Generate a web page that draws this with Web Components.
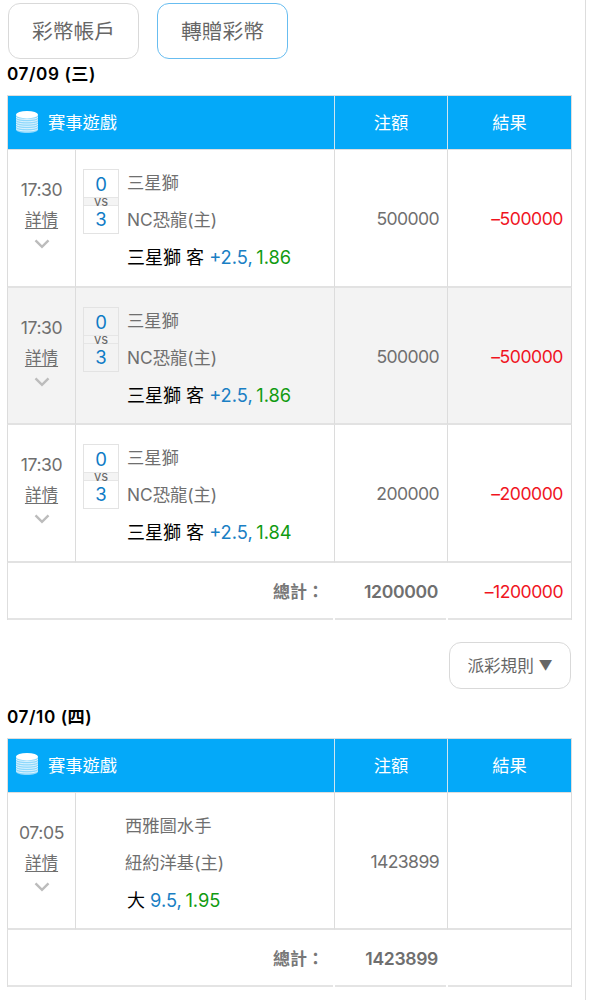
<!DOCTYPE html>
<html lang="zh-Hant">
<head>
<meta charset="utf-8">
<title>彩幣帳戶</title>
<style>
  body {
    margin: 0;
    background: #fff;
    color: #6f6f6f;
    font-family: Inter, "Noto Sans CJK TC", sans-serif;
    font-size: 17px;
  }
  .rules {
    display: flex;
    justify-content: flex-end;
    padding: 22px 1px 13px 0;
  }
  .rules small {
    font-size: 14px;
    vertical-align: 1px;
  }
</style>
</head>
<body>
<account-page>
  <pill-button slot="nav">彩幣帳戶</pill-button>
  <pill-button slot="nav" active>轉贈彩幣</pill-button>

  <bet-table date="07/09 (三)" stake="1200000" result="–1200000">
    <bet-row time="17:30" away="三星獅" home="NC恐龍(主)" away-score="0" home-score="3" pick="三星獅 客" line="+2.5," odds="1.86" stake="500000" result="–500000"></bet-row>
    <bet-row shaded time="17:30" away="三星獅" home="NC恐龍(主)" away-score="0" home-score="3" pick="三星獅 客" line="+2.5," odds="1.86" stake="500000" result="–500000"></bet-row>
    <bet-row time="17:30" away="三星獅" home="NC恐龍(主)" away-score="0" home-score="3" pick="三星獅 客" line="+2.5," odds="1.84" stake="200000" result="–200000"></bet-row>
  </bet-table>

  <div class="rules">
    <pill-button small>派彩規則 <small>▼</small></pill-button>
  </div>

  <bet-table date="07/10 (四)" stake="1423899">
    <bet-row time="07:05" away="西雅圖水手" home="紐約洋基(主)" pick="大" line="9.5," odds="1.95" stake="1423899"></bet-row>
  </bet-table>
</account-page>

<script>
function makeTemplate(html) {
  var template = document.createElement('template')
  template.innerHTML = html
  return template
}

var pageTemplate = makeTemplate(`
    <style>
    :host {
      display: block;
      box-sizing: border-box;
      width: 586px;
      height: 1000px;
      padding: 3px 13px 0 7px;
      border-right: 1px solid #ddd;
      overflow: hidden;
    }
    nav {
      display: flex;
      gap: 18px;
      padding-left: 1px;
    }
    </style>
    <nav><slot name="nav"></slot></nav>
    <slot></slot>
`)

class AccountPage extends HTMLElement {
    constructor(){
        super();
        this.attachShadow({mode: 'open'});
        this.shadowRoot.appendChild(pageTemplate.content.cloneNode(true));
    }
}

var buttonTemplate = makeTemplate(`
    <style>
    :host {
      display: block;
    }
    button {
      display: block;
      box-sizing: border-box;
      width: 131px;
      height: 56px;
      padding: 0;
      border: 1px solid #d9d9d9;
      border-radius: 12px;
      background: #fff;
      color: #666;
      font: inherit;
      font-size: 20.8px;
      line-height: 56px;
      text-align: center;
    }
    :host([active]) button {
      border-color: #68bdf0;
    }
    :host([small]) button {
      width: 122px;
      height: 47px;
      font-size: 16.6px;
      line-height: 46px;
    }
    </style>
    <button><slot></slot></button>
`)

class PillButton extends HTMLElement {
    constructor(){
        super();
        this.attachShadow({mode: 'open'});
        this.shadowRoot.appendChild(buttonTemplate.content.cloneNode(true));
    }
}

var coinTemplate = makeTemplate(`
    <style>
    :host { display: block; width: 22px; height: 22px; }
    svg { display: block; }
    </style>
    <svg width="22" height="22" viewBox="0 0 22 22">
      <path d="M0 3.500V18.500c0 2 5 3.500 11 3.500s11-1.500 11-3.500V3.500z" fill="#fff" fill-opacity=".55"/>
      <path d="M0 6.200c1 3 21 3 22 0M0 8.500c1 3 21 3 22 0M0 10.800c1 3 21 3 22 0M0 13.100c1 3 21 3 22 0M0 15.400c1 3 21 3 22 0M0 17.700c1 3 21 3 22 0" fill="none" stroke="#fff" stroke-opacity=".7"/>
      <ellipse cx="11" cy="3.700" rx="11" ry="3.700" fill="#fff"/>
    </svg>
`)

class CoinIcon extends HTMLElement {
    constructor(){
        super();
        this.attachShadow({mode: 'open'});
        this.shadowRoot.appendChild(coinTemplate.content.cloneNode(true));
    }
}

var tableTemplate = makeTemplate(`
    <style>
    :host {
      display: block;
      width: 565px;
      --columns: 68px 259px 113px 125px;
    }
    h2 {
      margin: 0;
      height: 36px;
      color: #000;
      font-size: 17.2px;
      font-weight: 600;
      line-height: 30px;
      letter-spacing: .55px;
    }
    .head, .total {
      display: grid;
      box-sizing: border-box;
      border: 1px solid #dedede;
    }
    .head {
      grid-template-columns: 326px 113px 124px;
      height: 55px;
      color: #fff;
      background: #04a9f9;
      font-size: 17.3px;
      line-height: 53px;
      text-align: center;
    }
    .head div + div { border-left: 1px solid #cfe6f1; }
    .head .game {
      display: flex;
      align-items: center;
      gap: 10px;
      padding-left: 8px;
    }
    .head coin-icon { margin-top: -2px; }
    .total {
      grid-template-columns: 325px 111px 1fr;
      column-gap: 2px;
      height: 57px;
      border-width: 0 1px;
      line-height: 58px;
      text-align: right;
      font-weight: 600;
    }
    .total div {
      box-sizing: border-box;
      height: 57px;
      border-bottom: 2px solid #e4e4e4;
    }
    .label { padding-right: 9px; font-size: 17px; font-weight: 600; color: #777; }
    .stake, .result { padding-right: 8px; font-size: 17.600px; letter-spacing: -.35px; }
    .result { color: #f0141e; font-weight: 400; letter-spacing: -.5px; }
    </style>
    <h2></h2>
    <div class="head">
      <div class="game"><coin-icon></coin-icon><span>賽事遊戲</span></div>
      <div>注額</div>
      <div>結果</div>
    </div>
    <slot></slot>
    <div class="total">
      <div class="label">總計：</div>
      <div class="stake"></div>
      <div class="result"></div>
    </div>
`)

class BetTable extends HTMLElement {
    constructor(){
        super();
        this.attachShadow({mode: 'open'});
        this.shadowRoot.appendChild(tableTemplate.content.cloneNode(true));
        this.shadowRoot.querySelector('h2').textContent = this.getAttribute('date');
        this.shadowRoot.querySelector('.stake').textContent = this.getAttribute('stake');
        this.shadowRoot.querySelector('.result').textContent = this.getAttribute('result') || '';
    }
}

var scoreTemplate = makeTemplate(`
    <style>
    :host {
      display: block;
      box-sizing: border-box;
      width: 36px;
      height: 65px;
      border: 1px solid #e3e3e3;
      text-align: center;
      color: #0e7bc6;
      font-size: 18.500px;
    }
    .score { height: 27px; line-height: 28px; }
    .score.home { line-height: 27px; }
    .vs {
      box-sizing: border-box;
      height: 9px;
      border: solid #e6e6e6;
      border-width: 1px 0;
      background: #f4f4f4;
      color: #666;
      font-size: 13px;
      line-height: 7px;
    }
    </style>
    <div class="score away"></div>
    <div class="vs">vs</div>
    <div class="score home"></div>
`)

class ScoreBox extends HTMLElement {
    constructor(){
        super();
        this.attachShadow({mode: 'open'});
        this.shadowRoot.appendChild(scoreTemplate.content.cloneNode(true));
    }
    setScore(away, home){
        this.shadowRoot.querySelector('.away').textContent = away;
        this.shadowRoot.querySelector('.home').textContent = home;
    }
}

var rowTemplate = makeTemplate(`
    <style>
    :host {
      display: grid;
      grid-template-columns: var(--columns);
      grid-template-rows: 137.500px;
      height: 137.500px;
      background: #fff;
    }
    :host([shaded]) { background: #f3f3f3; }
    .cell {
      box-sizing: border-box;
      border-left: 1px solid #dcdcdc;
      border-bottom: 2px solid #e2e2e2;
    }
    .time {
      padding-top: 25px;
      text-align: center;
      line-height: 30px;
      font-size: 17.600px;
    }
    .time span { letter-spacing: -.4px; }
    .time a {
      display: block;
      font-size: 16.600px;
      text-decoration: underline;
      text-underline-offset: 2px;
    }
    .time svg { display: block; margin: 4px auto 0; }
    .match {
      display: grid;
      grid-template-columns: 36px 1fr;
      column-gap: 8px;
      padding: 19px 0 0 7px;
      white-space: nowrap;
    }
    .match p { margin: 0; height: 37px; line-height: 28px; font-size: 17.300px; }
    .match .home { line-height: 27px; }
    .match .pick { color: #000; font-size: 18px; line-height: 29px; }
    .pick .line { color: #1a7fc4; }
    .pick .odds { color: #119b11; }
    .pick span { font-size: 18.300px; }
    .pick .odds { margin-left: -1.500px; }
    :host(:not([home-score])) score-box { visibility: hidden; }
    :host(:not([home-score])) .away,
    :host(:not([home-score])) .home { margin-left: -2px; }
    .amount {
      padding-right: 8px;
      line-height: 138px;
      text-align: right;
      font-size: 17.600px;
      letter-spacing: -.6px;
    }
    .result { color: #f0141e; border-right: 1px solid #dcdcdc; letter-spacing: -.45px; }
    </style>
    <div class="cell time">
      <span></span>
      <a>詳情</a>
      <svg width="16" height="10" viewBox="0 0 16 10"><path d="M1.500 1.300L8 7.800l6.500-6.500" fill="none" stroke="#bcbcbc" stroke-width="2.400"/></svg>
    </div>
    <div class="cell match">
      <score-box></score-box>
      <div>
        <p class="away"></p>
        <p class="home"></p>
        <p class="pick"><b style="font-weight:400"></b> <span class="line"></span> <span class="odds"></span></p>
      </div>
    </div>
    <div class="cell amount stake"></div>
    <div class="cell amount result"></div>
`)

class BetRow extends HTMLElement {
    constructor(){
        super();
        this.attachShadow({mode: 'open'});
        this.shadowRoot.appendChild(rowTemplate.content.cloneNode(true));
        this.fill('.time span', 'time');
        this.fill('.away', 'away');
        this.fill('.home', 'home');
        this.fill('.pick b', 'pick');
        this.fill('.line', 'line');
        this.fill('.odds', 'odds');
        this.fill('.stake', 'stake');
        this.fill('.result', 'result');
        if (this.hasAttribute('home-score')) {
            this.shadowRoot.querySelector('score-box').setScore(this.getAttribute('away-score'), this.getAttribute('home-score'));
        }
    }
    fill(selector, name){
        this.shadowRoot.querySelector(selector).textContent = this.getAttribute(name) || '';
    }
}

window.customElements.define('coin-icon', CoinIcon)
window.customElements.define('score-box', ScoreBox)
window.customElements.define('pill-button', PillButton)
window.customElements.define('bet-row', BetRow)
window.customElements.define('bet-table', BetTable)
window.customElements.define('account-page', AccountPage)
</script>
</body>
</html>
